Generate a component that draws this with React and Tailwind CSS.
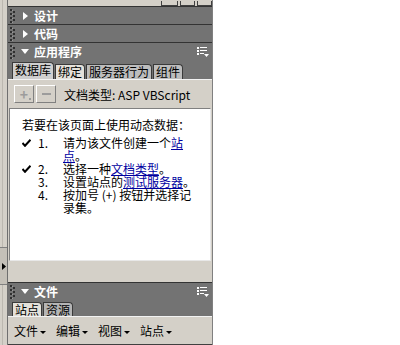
import React from 'react';

const FONT = "font-['Noto_Sans_CJK_SC','Noto_Sans',sans-serif]";

const Gripper = () => (
  <svg width="6" height="14" viewBox="0 0 6 14" className="shrink-0">
    {[0, 4, 8, 12].map((y) => (
      <rect key={'a' + y} x="0" y={y} width="2" height="2" fill="#2f2f2f" />
    ))}
    {[2, 6, 10].map((y) => (
      <rect key={'b' + y} x="3" y={y} width="2" height="2" fill="#2f2f2f" />
    ))}
    {[1, 5, 9, 13].map((y) => (
      <rect key={'c' + y} x="2" y={y} width="1" height="1" fill="#9a9a9a" />
    ))}
  </svg>
);

const OptionsIcon = () => (
  <svg width="12" height="10" viewBox="0 0 12 10" className="shrink-0">
    <rect x="0" y="0" width="2" height="2" fill="#fff" />
    <rect x="3" y="0" width="7" height="1" fill="#fff" />
    <rect x="0" y="3" width="2" height="2" fill="#fff" />
    <rect x="3" y="3" width="7" height="1" fill="#fff" />
    <rect x="0" y="6" width="2" height="2" fill="#fff" />
    <rect x="3" y="6" width="4" height="1" fill="#fff" />
    <path d="M7 7 L12 7 L9.5 10 Z" fill="#fff" />
  </svg>
);

const Header = ({ title, open, options }) => (
  <div className="h-[18px] border-t border-[#333333] bg-[#737373] flex items-center pl-[2px] pr-[3px]">
    <Gripper />
    <div className="w-[18px] flex justify-center">
      {open ? (
        <svg width="8" height="5" viewBox="0 0 8 5"><path d="M0 0 L8 0 L4 5 Z" fill="#fff" /></svg>
      ) : (
        <svg width="5" height="8" viewBox="0 0 5 8"><path d="M0 0 L5 4 L0 8 Z" fill="#fff" /></svg>
      )}
    </div>
    <span className="text-white font-bold leading-[13px]">{title}</span>
    <div className="flex-1" />
    {options && <OptionsIcon />}
  </div>
);

const Tab = ({ label, bg, h }) => (
  <div className={`${bg} ${h} px-[2px] border border-b-0 border-[#3a3a3a] rounded-tr-[4px] leading-[13px] text-black whitespace-nowrap`}>
    {label}
  </div>
);

const ToolButton = ({ children }) => (
  <div className="w-[20px] h-[18px] bg-[#d4d0c8] border border-t-white border-l-white border-r-[#808080] border-b-[#808080] flex items-center justify-center relative">
    {children}
  </div>
);

const Check = () => (
  <svg width="9" height="8" viewBox="0 0 9 8">
    <path d="M0.5 4 L3 6.8 L8.5 0.8" stroke="#000" strokeWidth="2" fill="none" />
  </svg>
);

const Link = ({ children }) => <span className="text-[#0000a0] underline">{children}</span>;

const MenuItem = ({ label }) => (
  <div className="flex items-center">
    <span>{label}</span>
    <svg width="6" height="3" viewBox="0 0 6 3" className="ml-[2px] mt-[3px]"><path d="M0 0 L6 0 L3 3 Z" fill="#000" /></svg>
  </div>
);

const Step = ({ check, num, lines, className = '' }) => (
  <div className={`flex ${className}`}>
    <div className="w-[15px] h-[13px] flex items-center">{check && <Check />}</div>
    <div className="w-[26px] pl-[1px]">{num}</div>
    <div className="flex flex-col whitespace-nowrap">
      {lines.map((l, i) => (
        <div key={i}>{l}</div>
      ))}
    </div>
  </div>
);

export default function App() {
  return (
    <div className={`w-[400px] h-[345px] bg-white flex overflow-hidden text-[12px] ${FONT}`}>
      {/* left splitter */}
      <div className="w-[8px] h-full bg-[#d4d0c8] flex flex-col border-r border-[#6f6f6f]">
        <div className="h-[247px] w-[3px] border-r border-r-[#bcb8b0]" />
        <div className="h-[38px] bg-[#c4c0b8] border-y border-[#808080] flex items-center pl-[2px]">
          <svg width="4" height="7" viewBox="0 0 4 7"><path d="M0 0 L4 3.5 L0 7 Z" fill="#000" /></svg>
        </div>
        <div className="flex-1 w-[3px] border-r border-r-[#bcb8b0]" />
      </div>

      {/* panel column */}
      <div className="w-[205px] h-full flex flex-col bg-[#d4d0c8] border-r border-[#808080]">
        <div className="h-[6px] flex justify-end items-end gap-[2px]">
          <div className="w-[17px] h-[5px] border border-t-0 border-[#404040] bg-[#d4d0c8]" />
          <div className="w-[15px] h-[5px] border border-t-0 border-[#404040] bg-[#d4d0c8]" />
          <div className="w-[15px] h-[5px] border border-t-0 border-[#404040] bg-[#d4d0c8]" />
        </div>

        <Header title="设计" />
        <Header title="代码" />
        <Header title="应用程序" open options />

        <div className="h-[19px] bg-[#737373] flex items-end pl-[4px] gap-[1px]">
          <Tab label="数据库" bg="bg-[#cfcfcf]" h="h-[17px]" />
          <Tab label="绑定" bg="bg-[#e4e1da]" h="h-[15px]" />
          <Tab label="服务器行为" bg="bg-[#bdbdbd]" h="h-[15px]" />
          <Tab label="组件" bg="bg-[#bdbdbd]" h="h-[15px]" />
        </div>

        <div className="h-[29px] border-t border-[#f2f2f2] flex items-center pl-[6px] gap-[2px]">
          <ToolButton>
            <span className="text-[#9c9c9c] font-bold text-[14px] leading-[14px]">+</span>
            <div className="absolute right-[2px] bottom-[2px] w-[2px] h-[2px] bg-[#9c9c9c]" />
          </ToolButton>
          <ToolButton>
            <div className="w-[9px] h-[2px] bg-[#9c9c9c]" />
          </ToolButton>
          <span className="ml-[6px] leading-[13px] text-black whitespace-nowrap">文档类型: ASP VBScript</span>
        </div>

        <div className="h-[153px] mx-[1px] bg-white border border-t-[#808080] border-l-[#808080] border-r-[#e8e8e8] border-b-[#e8e8e8] pt-[9px] pl-[12px] leading-[13px] text-black">
          <div className="whitespace-nowrap">若要在该页面上使用动态数据：</div>
          <Step className="mt-[5px]" check num="1." lines={[<>请为该文件创建一个<Link>站</Link></>, <><Link>点</Link>。</>]} />
          <Step check num="2." lines={[<>选择一种<Link>文档类型</Link>。</>]} />
          <Step num="3." lines={[<>设置站点的<Link>测试服务器</Link>。</>]} />
          <Step num="4." lines={['按加号 (+) 按钮并选择记', '录集。']} />
        </div>

        <div className="flex-1" />

        <Header title="文件" open options />
        <div className="h-[16px] bg-[#737373] flex items-end pl-[4px] gap-[1px]">
          <Tab label="站点" bg="bg-[#e4e1da]" h="h-[14px]" />
          <Tab label="资源" bg="bg-[#b5b5b5]" h="h-[14px]" />
        </div>

        <div className="h-[29px] border-t border-[#f2f2f2] border-b border-b-[#404040] flex items-center pl-[6px] gap-[10px] leading-[13px] text-black">
          <MenuItem label="文件" />
          <MenuItem label="编辑" />
          <MenuItem label="视图" />
          <MenuItem label="站点" />
        </div>
      </div>
    </div>
  );
}
